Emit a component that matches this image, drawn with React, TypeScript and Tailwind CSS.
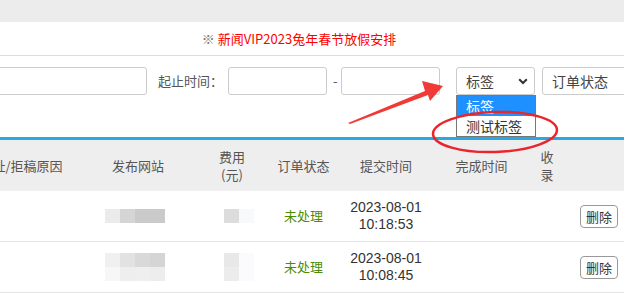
import React from 'react';

const cols = 'grid grid-cols-[134px_100px_88px_55px_110px_81px_50px_52px]';

function Chevron() {
  return (
    <svg width="10" height="7" viewBox="0 0 10 7" className="shrink-0">
      <path d="M1.2 1.2 L5 5 L8.8 1.2" fill="none" stroke="#333" strokeWidth="2" />
    </svg>
  );
}

function Blocks({ rows }: { rows: string[][] }) {
  return (
    <div className="flex flex-col">
      {rows.map((r, i) => (
        <div key={i} className="flex">
          {r.map((c, j) => (
            <div key={j} className={j === 2 && r.length === 3 ? 'h-[14px] w-[30px]' : 'h-[14px] w-[15px]'} style={{ background: c }} />
          ))}
        </div>
      ))}
    </div>
  );
}

const data = [
  {
    site: [['#ebebeb', '#d5d5d5', '#cacaca']],
    fee: [['#dcdcdc', '#f8f9fb']],
    date: '2023-08-01',
    time: '10:18:53',
  },
  {
    site: [
      ['#f0f0f0', '#e2e2e2', '#d9d9d9', '#d5d5d5'],
      ['#f7f7f7', '#eeeeee', '#efefef', '#ededed'],
    ],
    fee: [
      ['#e8e8e8', '#fbfbfd'],
      ['#ececec', '#fbfbfd'],
    ],
    date: '2023-08-01',
    time: '10:08:45',
  },
];

export default function App() {
  return (
    <div className="relative w-[624px] h-[297px] overflow-hidden bg-white text-[13px] text-[#555] font-['Noto_Sans_CJK_SC','Microsoft_YaHei',sans-serif]">
      {/* top bar */}
      <div className="h-[22px] bg-[#ececec]" />

      {/* notice */}
      <div className="h-[34px] border-b border-[#dcdcdc] flex items-center justify-center pr-[26px] text-[13px]">
        <span className="text-[#777] mr-[3px]">※</span>
        <span className="text-[#ff0000]">新闻VIP2023兔年春节放假安排</span>
      </div>

      {/* filters */}
      <div className="h-[81px] pt-[11px]">
        <div className="flex items-center -ml-[60px] w-[720px]">
          <div className="shrink-0 w-[207px] h-[28px] border border-[#ccc] rounded-[3px]" />
          <span className="shrink-0 ml-[11px] w-[62px] whitespace-nowrap text-[#555]">起止时间：</span>
          <div className="shrink-0 ml-[8px] w-[99px] h-[28px] border border-[#ccc] rounded-[3px]" />
          <span className="shrink-0 ml-[6px] w-[5px]">-</span>
          <div className="shrink-0 ml-[3px] w-[99px] h-[28px] border border-[#ccc] rounded-[3px]" />
          <div className="shrink-0 relative ml-[16px] w-[79px]">
            <div className="h-[28px] border border-[#ccc] rounded-[3px] flex items-center justify-between pl-[9px] pr-[6px] text-[14px] text-[#444]">
              <span>标签</span>
              <Chevron />
            </div>
            <div className="absolute left-0 top-full w-[80px] border border-[#777] bg-white text-[14px] leading-[20px] z-10">
              <div className="bg-[#1e90ff] text-white pl-[9px]">标签</div>
              <div className="text-[#333] pl-[9px]">测试标签</div>
            </div>
          </div>
          <div className="shrink-0 ml-[7px] w-[100px] h-[28px] border border-[#ccc] rounded-[3px] flex items-center justify-between pl-[9px] pr-[6px] text-[14px] text-[#444]">
            <span>订单状态</span>
            <Chevron />
          </div>
        </div>
      </div>

      {/* table */}
      <div className="border-t-[3px] border-[#29a9e1] -ml-[46px] w-[670px]">
        <div className={`${cols} h-[51px] bg-[#eeeeee] items-center text-center leading-[18px] text-[#555]`}>
          <div>地址/拒稿原因</div>
          <div>发布网站</div>
          <div>费用<br />(元)</div>
          <div>订单状态</div>
          <div>提交时间</div>
          <div>完成时间</div>
          <div>收<br />录</div>
          <div />
        </div>
        {data.map((row, i) => (
          <div key={i} className={`${cols} h-[51px] border-b border-[#e6e6e6] items-center text-center`}>
            <div />
            <div className="flex justify-center pr-[6px]">
              <Blocks rows={row.site} />
            </div>
            <div className="flex justify-center pl-[13px]">
              <Blocks rows={row.fee} />
            </div>
            <div className="text-[#4d8c00]">未处理</div>
            <div className="leading-[17px] text-[14px] text-[#333] font-['Liberation_Sans',Arial,sans-serif]">
              {row.date}
              <br />
              {row.time}
            </div>
            <div />
            <div />
            <div className="flex justify-center pl-[2px]">
              <button className="h-[23px] px-[5px] border border-[#999] rounded-[4px] bg-white text-[13px] text-[#333] leading-none">
                删除
              </button>
            </div>
          </div>
        ))}
      </div>

      {/* annotations */}
      <svg className="absolute inset-0 pointer-events-none z-20" width="624" height="297">
        <polygon points="348,123 425,91 422,81 443,86 430,101 428,95 350,124" fill="#f03a37" />
        <ellipse cx="495" cy="132" rx="62" ry="20" fill="none" stroke="#e8262c" strokeWidth="2.5" transform="rotate(-2 495 132)" />
      </svg>
    </div>
  );
}
